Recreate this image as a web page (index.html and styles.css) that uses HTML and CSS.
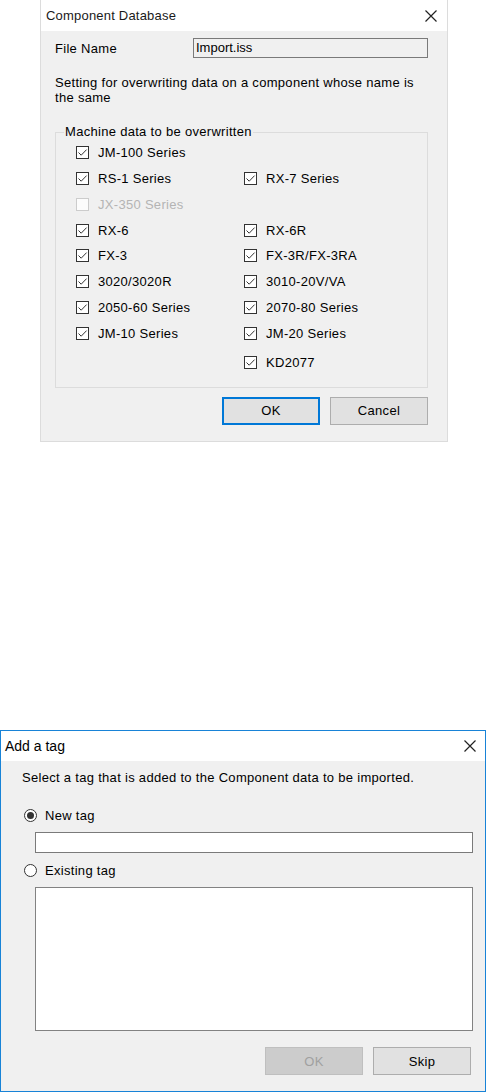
FILE: index.html
```html
<!DOCTYPE html>
<html>
<head>
<meta charset="utf-8">
<link rel="stylesheet" href="styles.css">
</head>
<body>
<div class="page">
  <div class="dlg dlg1">
    <div class="title">
      <span class="title-text">Component Database</span>
      <svg class="close" width="12" height="12" viewBox="0 0 12 12"><path d="M0.5 0.5 L11.5 11.5 M11.5 0.5 L0.5 11.5" stroke="#222" stroke-width="1.2" fill="none"/></svg>
    </div>
    <div class="body1">
      <div class="file-row">
        <span class="file-label">File Name</span>
        <div class="file-input">Import.iss</div>
      </div>
      <p class="desc">Setting for overwriting data on a component whose name is the same</p>
      <fieldset class="group">
        <legend class="legend">Machine data to be overwritten</legend>
        <div class="grid">
          <label class="cb"><span class="box"><svg width="11" height="11" viewBox="0 0 11 11"><path d="M1.5 5.5 L4.2 8.2 L9.6 2.6" stroke="#333" stroke-width="1" fill="none"/></svg></span>JM-100 Series</label>
          <span></span>
          <label class="cb"><span class="box"><svg width="11" height="11" viewBox="0 0 11 11"><path d="M1.5 5.5 L4.2 8.2 L9.6 2.6" stroke="#333" stroke-width="1" fill="none"/></svg></span>RS-1 Series</label>
          <label class="cb"><span class="box"><svg width="11" height="11" viewBox="0 0 11 11"><path d="M1.5 5.5 L4.2 8.2 L9.6 2.6" stroke="#333" stroke-width="1" fill="none"/></svg></span>RX-7 Series</label>
          <label class="cb disabled"><span class="box"></span>JX-350 Series</label>
          <span></span>
          <label class="cb"><span class="box"><svg width="11" height="11" viewBox="0 0 11 11"><path d="M1.5 5.5 L4.2 8.2 L9.6 2.6" stroke="#333" stroke-width="1" fill="none"/></svg></span>RX-6</label>
          <label class="cb"><span class="box"><svg width="11" height="11" viewBox="0 0 11 11"><path d="M1.5 5.5 L4.2 8.2 L9.6 2.6" stroke="#333" stroke-width="1" fill="none"/></svg></span>RX-6R</label>
          <label class="cb"><span class="box"><svg width="11" height="11" viewBox="0 0 11 11"><path d="M1.5 5.5 L4.2 8.2 L9.6 2.6" stroke="#333" stroke-width="1" fill="none"/></svg></span>FX-3</label>
          <label class="cb"><span class="box"><svg width="11" height="11" viewBox="0 0 11 11"><path d="M1.5 5.5 L4.2 8.2 L9.6 2.6" stroke="#333" stroke-width="1" fill="none"/></svg></span>FX-3R/FX-3RA</label>
          <label class="cb"><span class="box"><svg width="11" height="11" viewBox="0 0 11 11"><path d="M1.5 5.5 L4.2 8.2 L9.6 2.6" stroke="#333" stroke-width="1" fill="none"/></svg></span>3020/3020R</label>
          <label class="cb"><span class="box"><svg width="11" height="11" viewBox="0 0 11 11"><path d="M1.5 5.5 L4.2 8.2 L9.6 2.6" stroke="#333" stroke-width="1" fill="none"/></svg></span>3010-20V/VA</label>
          <label class="cb"><span class="box"><svg width="11" height="11" viewBox="0 0 11 11"><path d="M1.5 5.5 L4.2 8.2 L9.6 2.6" stroke="#333" stroke-width="1" fill="none"/></svg></span>2050-60 Series</label>
          <label class="cb"><span class="box"><svg width="11" height="11" viewBox="0 0 11 11"><path d="M1.5 5.5 L4.2 8.2 L9.6 2.6" stroke="#333" stroke-width="1" fill="none"/></svg></span>2070-80 Series</label>
          <label class="cb"><span class="box"><svg width="11" height="11" viewBox="0 0 11 11"><path d="M1.5 5.5 L4.2 8.2 L9.6 2.6" stroke="#333" stroke-width="1" fill="none"/></svg></span>JM-10 Series</label>
          <label class="cb"><span class="box"><svg width="11" height="11" viewBox="0 0 11 11"><path d="M1.5 5.5 L4.2 8.2 L9.6 2.6" stroke="#333" stroke-width="1" fill="none"/></svg></span>JM-20 Series</label>
          <span class="last"></span>
          <label class="cb last"><span class="box"><svg width="11" height="11" viewBox="0 0 11 11"><path d="M1.5 5.5 L4.2 8.2 L9.6 2.6" stroke="#333" stroke-width="1" fill="none"/></svg></span>KD2077</label>
        </div>
      </fieldset>
      <div class="buttons1">
        <button class="btn default">OK</button>
        <button class="btn">Cancel</button>
      </div>
    </div>
  </div>

  <div class="dlg dlg2">
    <div class="title title2">
      <span class="title-text2">Add a tag</span>
      <svg class="close" width="12" height="12" viewBox="0 0 12 12"><path d="M0.5 0.5 L11.5 11.5 M11.5 0.5 L0.5 11.5" stroke="#222" stroke-width="1.2" fill="none"/></svg>
    </div>
    <div class="body2">
      <p class="prompt">Select a tag that is added to the Component data to be imported.</p>
      <label class="radio-row first"><span class="radio on"></span>New tag</label>
      <div class="text-input"></div>
      <label class="radio-row"><span class="radio"></span>Existing tag</label>
      <div class="listbox"></div>
      <div class="buttons2">
        <button class="btn disabled">OK</button>
        <button class="btn">Skip</button>
      </div>
    </div>
  </div>
</div>
</body>
</html>
```

FILE: styles.css
```css
html, body {
  margin: 0;
  padding: 0;
  background: #ffffff;
}

body {
  font-family: "Liberation Sans", Arial, sans-serif;
  font-size: 13px;
  letter-spacing: 0.3px;
  color: #000;
}

.page {
  display: flex;
  flex-direction: column;
}

.dlg {
  box-sizing: border-box;
  background: #f0f0f0;
  display: flex;
  flex-direction: column;
}

.dlg1 {
  margin-left: 40px;
  width: 408px;
  height: 442px;
  border: 1px solid #dcdcdc;
  border-top: none;
}

.title {
  height: 31px;
  flex: none;
  background: #ffffff;
  display: flex;
  align-items: center;
  justify-content: space-between;
  padding: 0 10px 0 5px;
}

.title-text {
  font-size: 13px;
  letter-spacing: 0.2px;
  color: #1a1a1a;
}

.close {
  display: block;
}

.body1 {
  padding: 7px 19px 0 14px;
  display: flex;
  flex-direction: column;
}

.file-row {
  display: flex;
  align-items: center;
  height: 20px;
}

.file-label {
  width: 138px;
  flex: none;
}

.file-input {
  flex: 1;
  height: 20px;
  box-sizing: border-box;
  border: 1px solid #7a7a7a;
  background: #f0f0f0;
  padding: 0 2px;
  line-height: 18px;
  letter-spacing: 0;
}

.desc {
  margin: 17px 0 0 0;
  line-height: 15px;
}

.group {
  margin: 19px 0 0 0;
  padding: 0 0 15px 20px;
  border: 1px solid #dcdcdc;
  min-width: 0;
}

.legend {
  padding: 0 1px;
  margin-left: -12px;
  line-height: 16px;
}

.grid {
  display: grid;
  grid-template-columns: 168px 1fr;
  grid-auto-rows: 25.75px;
}

.grid .last {
  margin-top: 7px;
}

.cb {
  display: flex;
  align-items: center;
  gap: 9px;
  white-space: nowrap;
}

.box {
  width: 13px;
  height: 13px;
  box-sizing: border-box;
  border: 1px solid #333;
  background: #fff;
  display: flex;
  align-items: center;
  justify-content: center;
  flex: none;
}

.box svg {
  display: block;
}

.cb.disabled {
  color: #b4b4b4;
}

.cb.disabled .box {
  border-color: #cccccc;
  background: #fcfcfc;
}

.buttons1 {
  display: flex;
  justify-content: flex-end;
  gap: 10px;
  margin-top: 9px;
}

.btn {
  width: 98px;
  height: 28px;
  box-sizing: border-box;
  border: 1px solid #adadad;
  background: #e1e1e1;
  font-family: "Liberation Sans", Arial, sans-serif;
  font-size: 13px;
  letter-spacing: 0.3px;
  color: #000;
  padding: 0;
}

.btn.default {
  border: 2px solid #0078d7;
}

.btn.disabled {
  background: #cccccc;
  border-color: #bfbfbf;
  color: #a0a0a0;
}

.dlg2 {
  margin-top: 288px;
  width: 486px;
  height: 362px;
  border: 1px solid #1883d7;
}

.title2 {
  height: 30px;
  padding: 0 9px 0 4px;
}

.title-text2 {
  font-size: 14px;
  letter-spacing: 0;
  color: #000;
}

.body2 {
  padding: 9px 12px 0 21px;
  display: flex;
  flex-direction: column;
}

.prompt {
  margin: 0;
  line-height: 16px;
}

.radio-row {
  display: flex;
  align-items: center;
  gap: 8px;
  height: 18px;
  margin: 8px 0 0 2px;
}

.radio-row.first {
  margin-top: 20px;
}

.radio {
  width: 13px;
  height: 13px;
  box-sizing: border-box;
  border: 1px solid #333;
  border-radius: 50%;
  background: #fff;
  display: flex;
  align-items: center;
  justify-content: center;
  flex: none;
}

.radio.on::after {
  content: "";
  width: 7px;
  height: 7px;
  border-radius: 50%;
  background: #333;
}

.text-input {
  margin: 8px 0 0 13px;
  height: 21px;
  box-sizing: border-box;
  border: 1px solid #7a7a7a;
  background: #fff;
}

.listbox {
  margin: 8px 0 0 13px;
  height: 144px;
  box-sizing: border-box;
  border: 1px solid #828282;
  background: #fff;
}

.buttons2 {
  display: flex;
  justify-content: flex-end;
  gap: 10px;
  margin: 16px 2px 0 0;
}
```
